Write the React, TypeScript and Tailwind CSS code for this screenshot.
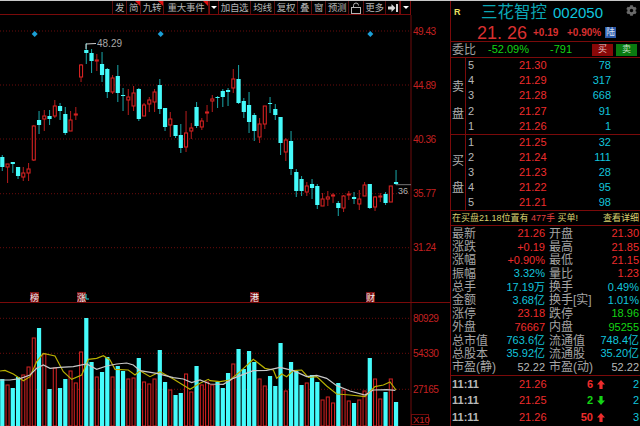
import React from 'react'
import { FaCog } from 'react-icons/fa'

// high, body top, body bottom, low, 1 = red (hollow)
const candles: number[][] = [
  [155, 157, 167, 171, 0], [164, 164, 167, 183, 1], [162, 162, 164, 173, 0], [167, 167, 176, 179, 0],
  [167, 173, 177, 181, 1], [163, 169, 173, 181, 1], [125, 126, 160, 161, 1], [111, 120, 125, 134, 0],
  [110, 116, 119, 131, 1], [110, 116, 119, 125, 0], [100, 106, 116, 118, 1], [103, 106, 111, 120, 0],
  [107, 114, 133, 135, 0], [111, 120, 131, 131, 1], [107, 114, 115, 120, 1], [64, 65, 77, 82, 1],
  [43, 50, 53, 64, 0], [49, 53, 61, 73, 0], [54, 60, 61, 71, 1], [52, 64, 75, 82, 0],
  [68, 69, 92, 98, 0], [75, 78, 92, 94, 1], [65, 76, 93, 102, 0], [88, 95, 96, 111, 0],
  [89, 97, 100, 115, 1], [86, 93, 106, 111, 1], [88, 89, 119, 121, 0], [103, 105, 116, 116, 1],
  [97, 100, 104, 112, 1], [89, 92, 102, 112, 1], [79, 85, 109, 114, 0], [108, 108, 127, 131, 0],
  [112, 119, 125, 137, 1], [125, 125, 136, 138, 0], [124, 135, 148, 153, 0], [111, 133, 147, 152, 1],
  [123, 128, 131, 139, 1], [102, 107, 126, 128, 0], [118, 121, 127, 130, 1], [105, 112, 113, 122, 1],
  [95, 99, 101, 112, 1], [96, 97, 98, 108, 0], [89, 91, 97, 107, 0], [88, 90, 92, 106, 0],
  [69, 79, 88, 93, 1], [65, 79, 103, 104, 0], [98, 101, 112, 118, 0], [92, 105, 122, 133, 0],
  [113, 115, 131, 141, 0], [118, 124, 137, 143, 1], [106, 106, 124, 129, 1], [97, 103, 104, 113, 0],
  [104, 109, 115, 120, 0], [117, 117, 143, 155, 0], [138, 140, 152, 161, 1], [131, 141, 169, 175, 0],
  [169, 172, 191, 197, 0], [176, 179, 191, 196, 0], [182, 186, 192, 196, 1], [179, 184, 188, 199, 0],
  [184, 186, 205, 209, 0], [193, 199, 206, 206, 1], [191, 197, 199, 206, 1], [193, 195, 196, 203, 1],
  [201, 203, 208, 216, 0], [195, 196, 208, 212, 1], [191, 194, 195, 200, 1], [192, 197, 199, 204, 0],
  [190, 199, 204, 210, 1], [182, 185, 196, 196, 1], [184, 184, 208, 209, 0], [196, 197, 207, 211, 1],
  [193, 196, 197, 202, 1], [192, 194, 203, 205, 0], [186, 186, 202, 202, 1], [170, 182, 184, 185, 0],
]

const volumes = [
  379, 385, 388, 377, 375, 367, 338, 328, 354, 389, 368, 388, 379, 371, 383, 352, 318, 362, 377, 372,
  357, 377, 366, 371, 379, 378, 358, 382, 384, 379, 350, 382, 390, 395, 393, 374, 392, 366, 385, 382,
  385, 382, 388, 373, 364, 349, 369, 351, 362, 379, 386, 376, 386, 343, 391, 362, 371, 385, 383, 375,
  382, 400, 397, 403, 383, 390, 401, 403, 400, 391, 358, 379, 399, 392, 379, 402,
]

const candleX = (i: number) => 2.3 + 5.25 * i

const toPts = (pts: number[][], dx: number) =>
  pts.map(([x, y]) => `${dx + x / 3},${280 + y / 3}`).join(' ')

const whiteLine =
  toPts([[0, 300], [30, 300], [60, 296], [90, 285], [110, 265], [130, 255], [150, 265], [180, 262], [220, 260], [260, 252], [290, 268], [320, 258], [350, 252], [380, 249], [400, 255], [420, 272], [470, 280], [520, 293], [550, 297], [575, 308], [600, 300], [630, 312]], 0) +
  ' ' +
  toPts([[40, 313], [70, 295], [100, 283], [130, 272], [170, 271], [210, 262], [250, 272], [290, 290], [320, 286], [350, 295], [380, 317], [420, 333], [465, 345], [490, 330], [530, 329], [556, 331]], 210)

const yellowLine =
  toPts([[0, 273], [15, 271], [40, 282], [70, 302], [90, 290], [110, 245], [130, 220], [165, 228], [190, 275], [215, 298], [245, 285], [265, 238], [290, 235], [310, 227], [330, 240], [345, 268], [385, 270], [405, 285], [420, 272], [450, 290], [480, 275], [520, 297], [570, 328], [600, 310], [625, 298], [630, 302]], 0) +
  ' ' +
  toPts([[30, 305], [60, 300], [90, 275], [130, 238], [165, 265], [190, 270], [200, 295], [215, 282], [230, 290], [250, 272], [275, 270], [295, 292], [320, 290], [350, 318], [380, 342], [420, 345], [465, 350], [495, 320], [520, 315], [540, 306], [558, 330]], 210)

const priceAxis = [[31, '49.43'], [85, '44.89'], [139, '40.36'], [193.7, '35.77'], [247.7, '31.24']] as const
const volAxis = [[318.3, '80929'], [353.3, '54330'], [389.3, '27165']] as const
const tags = [[30, '榜'], [77, '涨'], [250, '港'], [366, '财']] as const

const Chart = () => (
  <svg viewBox="0 15 450 411" className="block w-[450px] h-[411px]" fontFamily="'Liberation Sans','Noto Sans CJK SC',sans-serif">
    {[...priceAxis, ...volAxis].map(([y]) => (
      <line key={y} x1="0" x2="411" y1={y} y2={y} stroke="#6b0c0c" strokeDasharray="1 2" />
    ))}
    <line x1="0" x2="450" y1="302.5" y2="302.5" stroke="#7a0a0a" />
    <line x1="411" x2="411" y1="15" y2="426" stroke="#6e0c0c" />

    {[34.7, 160.7, 370.3].map((x) => (
      <polygon key={x} points={`${x},31 ${x + 3},34 ${x},37 ${x - 3},34`} fill="#1c9fd6" />
    ))}

    {candles.map(([hi, top, bot, lo, up], i) => {
      const x = candleX(i)
      return (
        <g key={i}>
          <line x1={x} x2={x} y1={hi} y2={lo} stroke={up ? '#a81a1a' : '#17999b'} strokeWidth="1.1" />
          {up ? (
            <rect x={x - 1.5} y={top} width="3" height={Math.max(bot - top, 1)} fill="#000" stroke="#d42222" strokeWidth="1.1" />
          ) : (
            <rect x={x - 2.1} y={top} width="4.2" height={Math.max(bot - top, 1)} fill="#45fbfb" />
          )}
        </g>
      )
    })}

    {volumes.map((y, i) => {
      const x = candleX(i)
      return candles[i][4] ? (
        <rect key={i} x={x - 1.5} y={y} width="3" height={426 - y} fill="#000" stroke="#c62020" strokeWidth="1.1" />
      ) : (
        <rect key={i} x={x - 2.1} y={y} width="4.2" height={426 - y} fill="#45fbfb" />
      )
    })}
    <polyline points={yellowLine} fill="none" stroke="#b8b000" strokeWidth="1.2" />
    <polyline points={whiteLine} fill="none" stroke="#c8c8c8" strokeWidth="1.2" />

    <polyline points="86,49 86,44 96,43.5" fill="none" stroke="#d0d0d0" />
    <text x="97" y="47" fontSize="10" fill="#a8a8a8">48.29</text>
    <line x1="396" x2="411" y1="184.7" y2="184.7" stroke="#777" />
    <text x="398" y="194" fontSize="9" fill="#b0b0b0">36</text>

    {tags.map(([x, t]) => (
      <g key={t}>
        <rect x={x} y="292" width="9" height="10" fill="#7e1212" />
        <text x={x} y="300.5" fontSize="9" fill="#eee">{t}</text>
      </g>
    ))}
    <polyline points="86,294 86,299 89,299" fill="none" stroke="#20d8d8" />

    {[...priceAxis, ...volAxis].map(([y, t]) => (
      <text key={t} x="413" y={y + 3.5} fontSize="10" letterSpacing="-0.5" fill="#c42020">{t}</text>
    ))}
    <rect x="411.5" y="414.5" width="17" height="10" fill="none" stroke="#6e0c0c" />
    <text x="413" y="423" fontSize="9.5" fill="#c42020">X10</text>
  </svg>
)

const Caret = () => (
  <div className="w-0 h-0 border-x-[3px] border-x-transparent border-t-[3px] border-t-white" />
)

const toolButtons = [
  { w: 'w-[14px]', label: '发' },
  { w: 'w-[14px]', label: '简', flag: true },
  { w: 'w-[23px]', label: '九转', flag: true },
  { w: 'w-[45px]', label: '重大事件', flag: true },
]
const toolButtons2 = [
  { w: 'w-[32px]', label: '加自选' },
  { w: 'w-[24px]', label: '均线' },
  { w: 'w-[23px]', label: '复权' },
  { w: 'w-[14px]', label: '叠' },
  { w: 'w-[14px]', label: '窗' },
  { w: 'w-[23px]', label: '预测' },
]

const ToolBtn = ({ w, label, flag }: { w: string; label: string; flag?: boolean }) => (
  <div className={`${w} relative h-full flex items-center justify-center border-r border-[#5c0d0d] text-[9.5px] leading-none text-[#b4b4b4] tracking-[-0.3px]`}>
    {label}
    {flag && <div className="absolute top-0 right-0 w-0 h-0 border-l-[5px] border-l-transparent border-t-[5px] border-t-[#e01010]" />}
  </div>
)

const Toolbar = () => (
  <div className="h-[14px] w-[411px] flex justify-end border-b border-[#7a0a0a]">
    <div className="flex h-[13px] border-l border-[#5c0d0d]">
      {toolButtons.map((b) => <ToolBtn key={b.label} {...b} />)}
      <div className="w-[10px] flex items-center justify-center border-x border-[#7a0a0a]"><Caret /></div>
      {toolButtons2.map((b) => <ToolBtn key={b.label} {...b} />)}
      <div className="w-[15px] flex items-center justify-center border-r border-[#5c0d0d]">
        <svg width="10" height="12" viewBox="0 0 10 12" fill="none" stroke="#b4b4b4">
          <path d="M2.5 5.5V3.5a2.5 2.5 0 0 1 5 0" />
          <rect x="0.5" y="5.5" width="9" height="6" />
        </svg>
      </div>
      <ToolBtn w="w-[22px]" label="更多" />
      <div className="w-[14px] flex items-center justify-center border-r border-[#5c0d0d]">
        <svg width="10" height="8" viewBox="0 0 10 8" fill="#d8d8d8">
          <path d="M0 2.5h3.5V0L7.5 4 3.5 8V5.5H0z" />
          <rect x="8" y="0" width="2" height="8" />
        </svg>
      </div>
      <div className="w-[11px] flex items-center justify-center border-x border-[#7a0a0a]"><Caret /></div>
    </div>
  </div>
)

const askRows = [['5', '21.30', '78'], ['4', '21.29', '317'], ['3', '21.28', '668'], ['2', '21.27', '91'], ['1', '21.26', '1']]
const bidRows = [['1', '21.25', '32'], ['2', '21.24', '111'], ['3', '21.23', '28'], ['4', '21.22', '95'], ['5', '21.21', '98']]

const BookSide = ({ side, rows, h, label }: { side: string; rows: string[][]; h: string; label: string }) => (
  <div className={`${h} flex border-b border-[#7a0a0a]`}>
    <div className={`w-[15px] pl-px flex flex-col justify-center gap-[15px] border-r border-[#7a0a0a] text-[12px] leading-[12px] text-[#b0b0b0] ${label}`}>
      <span>{side}</span>
      <span>盘</span>
    </div>
    <div className="flex-1 flex flex-col justify-around">
      {rows.map(([n, price, vol]) => (
        <div key={n} className="flex items-center h-[15px] text-[11px] leading-none">
          <span className="w-[53px] pl-[2px] text-[#b8b8b8]">{n}</span>
          <span className="w-[28px] text-[#ee2c2c]">{price}</span>
          <span className="w-[64px] text-right text-[#12c4dc]">{vol}</span>
        </div>
      ))}
    </div>
  </div>
)

const R = 'text-[#ee2c2c]'
const C = 'text-[#12c4dc]'
const G = 'text-[#14d414]'
const W = 'text-[#b8b8b8]'

const quotes: [string, string, string, string, string, string][] = [
  ['最新', '21.26', R, '开盘', '21.30', R],
  ['涨跌', '+0.19', R, '最高', '21.85', R],
  ['涨幅', '+0.90%', R, '最低', '21.15', R],
  ['振幅', '3.32%', C, '量比', '1.23', R],
  ['总手', '17.19万', C, '换手', '0.49%', C],
  ['金额', '3.68亿', C, '换手[实]', '1.01%', C],
  ['涨停', '23.18', R, '跌停', '18.96', G],
  ['外盘', '76667', R, '内盘', '95255', G],
  ['总市值', '763.6亿', C, '流通值', '748.4亿', C],
  ['总股本', '35.92亿', C, '流通股', '35.20亿', C],
  ['市盈(静)', '52.22', W, '市盈(动)', '52.22', W],
]

const ticks = [
  ['21.26', '6', R, true, '2'],
  ['21.25', '2', G, false, '2'],
  ['21.26', '50', R, true, '3'],
] as const

const SidePanel = () => (
  <div className="w-[190px] h-[425px] flex flex-col border-l border-[#7a0a0a]">
    <div className="h-[23px] flex items-center relative">
      <span className="ml-[3px] w-[27px] text-[9px] font-bold text-[#e8e060] leading-none">R</span>
      <span className="text-[16.5px] leading-none text-[#0aa6b4]">三花智控</span>
      <span className="ml-[6px] text-[15px] leading-none text-[#10c4dc]">002050</span>
      <FaCog className="absolute right-[3px] top-[4px] text-[#6a6a6a]" size={11} />
    </div>
    <div className="h-[18px] flex items-center border-b border-[#7a0a0a]">
      <span className="ml-[26px] w-[56px] text-[18px] leading-none text-[#d83030] whitespace-pre">21. 26</span>
      <span className="w-[34px] text-[10px] font-bold leading-none text-[#d83030]">+0.19</span>
      <span className="w-[38px] text-[10px] font-bold leading-none text-[#d83030]">+0.90%</span>
      <span className="w-[11px] h-[11px] flex items-center justify-center bg-[#2a58a8] text-[9px] leading-none text-[#d8e4f0]">陆</span>
    </div>
    <div className="h-[16px] flex items-center border-b border-[#7a0a0a] text-[11px] leading-none">
      <span className="w-[37px] pl-px text-[12px] text-[#a0a0a0]">委比</span>
      <span className={`w-[62px] ${G}`}>-52.09%</span>
      <span className={`w-[42px] ${G}`}>-791</span>
      <span className="w-[21px] h-[12px] mr-[3px] flex items-center justify-center bg-[#8a0808] text-[9px] text-[#e0c0c0]">买</span>
      <span className="w-[21px] h-[12px] flex items-center justify-center bg-[#0a7a10] text-[9px] text-[#c8e0c8]">卖</span>
    </div>
    <BookSide side="卖" rows={askRows} h="h-[77px]" label="pt-[8px]" />
    <BookSide side="买" rows={bidRows} h="h-[76px]" label="pt-[4px]" />
    <div className="h-[15px] flex items-center justify-between pl-px border-b border-[#7a0a0a] text-[9px] leading-none text-[#d8d070]">
      <span>
        在买盘21.18位置有 <span className="text-[#e04040]">477手</span> 买单!
      </span>
      <span className="pr-px">查看详细</span>
    </div>
    <div className="h-[149px] flex flex-col justify-between py-px">
      {quotes.map(([a, av, ac, b, bv, bc]) => (
        <div key={a} className="h-[13.5px] flex items-center pl-px text-[12px] leading-none text-[#a4a4a4]">
          <span className="w-[44px] whitespace-nowrap">{a}</span>
          <span className={`w-[49px] text-right text-[11px] ${ac}`}>{av}</span>
          <span className="w-[50px] ml-[4px] whitespace-nowrap">{b}</span>
          <span className={`w-[40px] text-right text-[11px] ${bc}`}>{bv}</span>
        </div>
      ))}
    </div>
    <div className="flex-1 flex flex-col justify-around border-t border-[#7a0a0a]">
      {ticks.map(([price, vol, color, up, last], i) => (
        <div key={i} className="h-[16px] flex items-center text-[11px] leading-none font-bold">
          <span className="w-[68px] pl-px text-[#b8b8b8]">11:11</span>
          <span className="w-[35px] font-normal text-[#ee2c2c]">{price}</span>
          <span className={`w-[39px] text-right ${color}`}>{vol}</span>
          <svg width="8" height="9" viewBox="0 0 8 9" className="ml-[4px]">
            <path d={up ? 'M4 0L8 4.5H5.6V9H2.4V4.5H0z' : 'M4 9L8 4.5H5.6V0H2.4V4.5H0z'} fill={up ? '#ee2c2c' : '#14d414'} />
          </svg>
          <span className={`ml-auto pr-px font-normal ${C}`}>{last}</span>
        </div>
      ))}
    </div>
  </div>
)

const App = () => {
  return (
    <div className="w-[640px] h-[426px] flex flex-col bg-black overflow-hidden font-['Liberation_Sans','Noto_Sans_CJK_SC',sans-serif]">
      <div className="h-px bg-[#c8c8c8]" />
      <div className="flex">
        <div className="w-[450px] flex flex-col">
          <Toolbar />
          <Chart />
        </div>
        <SidePanel />
      </div>
    </div>
  )
}

export default App
